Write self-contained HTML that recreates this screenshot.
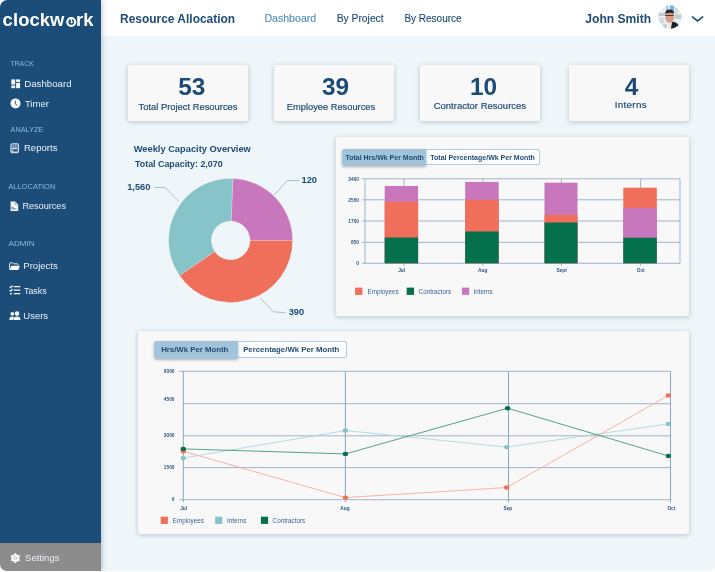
<!DOCTYPE html>
<html lang="en">
<head>
<meta charset="utf-8">
<title>Clockwork - Resource Allocation</title>
<style>
*{box-sizing:border-box;margin:0;padding:0}
html,body{width:715px;height:572px;background:#fff;overflow:hidden}
body{font-family:"Liberation Sans",sans-serif;color:#1f4b77;position:relative}
#app{position:absolute;left:0;top:0;width:715px;height:571px;border-radius:7.5px 0 5px 7px;overflow:hidden;background:#eef6f9;will-change:transform}
.abs{position:absolute;white-space:nowrap;line-height:1}
/* sidebar */
#side{position:absolute;left:0;top:0;width:101px;height:571px;background:#1c4d79;box-shadow:1px 0 5px rgba(40,70,100,.3);z-index:3}
#side .sec{position:absolute;color:#8fb9dc;line-height:1;white-space:nowrap}
#side .item{position:absolute;color:#e9eff5;line-height:1;white-space:nowrap}
#side svg{position:absolute;overflow:visible}
#logo{position:absolute;left:2.6px;top:11.4px;font-size:18.4px;font-weight:700;color:#fff;letter-spacing:.1px;line-height:1;white-space:nowrap}
#logo i{font-style:normal;color:transparent}
#settings{position:absolute;left:0;top:543.4px;width:101px;height:28px;background:#8c8c8c}
/* header */
#head{position:absolute;left:101px;top:0;width:614px;height:36px;background:#fff;z-index:2}
#head svg{position:absolute;overflow:visible}
#title{left:19.1px;top:14.4px;font-size:11.95px;font-weight:700}
.nav{top:14px;-webkit-text-stroke:.12px currentColor}
#user{left:484.3px;top:13.1px;font-size:12.1px;font-weight:700}
/* cards */
.card{position:absolute;background:#f8f8f8;border-radius:2px;box-shadow:0 1px 5px rgba(60,85,105,.32)}
.stat{width:120px;height:56px;top:64.6px}
.stat b{position:absolute;top:8.5px;font-size:24.4px;line-height:1;font-weight:700;color:#1c4a76;white-space:nowrap}
.stat span{position:absolute;line-height:1;white-space:nowrap;-webkit-text-stroke:.18px #1f4b77}
.tabs{position:absolute;display:flex;font-weight:700;line-height:1;white-space:nowrap}
.tabs div{position:relative}
.tabs .on{background:#a2c4db;border-radius:2.5px 0 0 2.5px;box-shadow:0 1.5px 3px rgba(50,80,110,.4);z-index:1}
.tabs .off{background:#fdfdfe;border:1px solid #b0cde2;border-left:0;border-radius:0 2.5px 2.5px 0}
.tabs span{position:absolute;white-space:nowrap}
#charts{position:absolute;left:0;top:0;width:715px;height:572px;z-index:1;overflow:visible}
svg text{font-family:"Liberation Sans",sans-serif}
#charts{fill:#1f4b77}
</style>
</head>
<body>
<div id="app">
  <div id="side">
    <div id="logo">clockw<i>o</i>rk</div>
    <svg width="12" height="12" viewBox="0 0 12 12" style="left:64.95px;top:15.7px" fill="none" stroke="#fff">
      <circle cx="6.25" cy="5.95" r="3.95" stroke-width="2.200"/>
      <path d="M5.100 3.050H7.600" stroke-width="1" stroke-opacity=".8"/><path d="M6.350 2.600V6.550L7.900 5.700" stroke-width="1.100"/>
    </svg>
    <div class="sec" style="left:10.4px;top:60.6px;font-size:6.9px">TRACK</div>
    <svg width="10" height="10" viewBox="0 0 10 10" style="left:11px;top:78.8px" fill="#f4f7fa">
      <rect x=".3" y=".4" width="3.9" height="5.2"/><rect x=".3" y="6.5" width="3.9" height="2.7"/><rect x="5.1" y=".4" width="4" height="2.6"/><rect x="5.1" y="3.9" width="4" height="5.3"/>
    </svg>
    <div class="item" style="left:24.2px;top:78.9px;font-size:9.7px">Dashboard</div>
    <svg width="11" height="11" viewBox="0 0 11 11" style="left:10px;top:98.2px">
      <circle cx="5.5" cy="5.4" r="5" fill="#fafbfd"/><path d="M5.3 2.9V5.9L7 7.2" stroke="#1c4d79" stroke-width=".9" fill="none" stroke-linecap="round"/>
    </svg>
    <div class="item" style="left:24.9px;top:98.8px;font-size:9.55px">Timer</div>
    <div class="sec" style="left:10.5px;top:126.3px;font-size:7.35px">ANALYZE</div>
    <svg width="10" height="11" viewBox="0 0 10 11" style="left:10px;top:143px" fill="none">
      <rect x=".9" y=".8" width="7.6" height="8.9" rx="1.4" fill="#5c7fa3" stroke="#d3deea" stroke-width="1.1"/><path d="M2.400 5.400H7M1.500 9H8" stroke="#e9eff5" stroke-width="1.1"/><path d="M2.600 6.400V8.600" stroke="#b8c9da" stroke-width=".8"/><path d="M3 2.900H3.900M5 2.900H6.300" stroke="#c3d1e0" stroke-width=".9"/><rect x="3.600" y="6.400" width="3.800" height="2" fill="#2b5a86"/>
    </svg>
    <div class="item" style="left:23.9px;top:143.3px;font-size:9.6px">Reports</div>
    <div class="sec" style="left:8.2px;top:182.8px;font-size:7.55px">ALLOCATION</div>
    <svg width="9" height="11" viewBox="0 0 9 11" style="left:9.6px;top:200.8px">
      <path d="M.6.600H5.200L8.200 3.600V10H.6Z" fill="#f9fafc"/><path d="M5 .8V3.800H8" fill="none" stroke="#7e9bb9" stroke-width=".8"/><path d="M2.100 8.400V5.200M3.500 8.400V6.200M4.900 8.400V7.100M6.200 8.400V7.800" stroke="#7391b1" stroke-width="1.200"/>
    </svg>
    <div class="item" style="left:22.4px;top:201.6px;font-size:9.15px">Resources</div>
    <div class="sec" style="left:8.5px;top:240px;font-size:8.1px">ADMIN</div>
    <svg width="12" height="9" viewBox="0 0 12 9" style="left:9.4px;top:262px">
      <path d="M.6 7.4V1.4Q.6.8 1.2.8H3.6L4.6 1.8H8.4Q9 1.800 9 2.400V3.4" fill="none" stroke="#e3eaf1" stroke-width="1"/><path d="M2.400 3.700H10.9L9.4 8.100H.6Z" fill="#fafbfd"/>
    </svg>
    <div class="item" style="left:23.3px;top:261.4px;font-size:9.55px">Projects</div>
    <svg width="12" height="11" viewBox="0 0 12 11" style="left:9.2px;top:284.6px" fill="none" stroke="#f1f5f8">
      <path d="M4.700 1.700H11.3M4.700 5.200H11.3M4.700 8.700H11.3" stroke-width="1.3"/><path d="M.6 1.600L1.700 2.600L3.600.5M.6 5.100L1.700 6.100L3.600 4" stroke-width="1.150"/><circle cx="1.900" cy="8.700" r=".95" fill="#f1f5f8" stroke="none"/>
    </svg>
    <div class="item" style="left:24px;top:286.500px;font-size:8.9px">Tasks</div>
    <svg width="12" height="10" viewBox="0 0 12 10" style="left:9px;top:311px" fill="#f4f7fa">
      <circle cx="3.300" cy="2.800" r="1.900"/><path d="M.3 8.900Q.3 5.600 3.300 5.600Q4.300 5.600 4.900 6L4.100 8.900Z"/><circle cx="8" cy="2.600" r="2.300"/><path d="M4.600 8.900Q4.600 5.500 8 5.500Q11.500 5.500 11.500 8.900Z"/>
    </svg>
    <div class="item" style="left:23.3px;top:310.700px;font-size:9.5px">Users</div>
    <div id="settings">
      <svg width="11" height="11" viewBox="0 0 11 11" style="left:10px;top:9.4px">
        <path d="M5.40 0.20L7.05 2.24L9.64 2.65L8.70 5.10L9.64 7.55L7.05 7.96L5.40 10.00L3.75 7.96L1.16 7.55L2.10 5.10L1.16 2.65L3.75 2.24Z" fill="#fbfbfb" stroke="#fbfbfb" stroke-width=".9" stroke-linejoin="round"/><circle cx="5.4" cy="5.1" r="1.5" fill="none" stroke="#bdbdbd" stroke-width=".9"/>
      </svg>
      <div class="item" style="left:25.100px;top:10.100px;font-size:9.5px">Settings</div>
    </div>
  </div>
  <div id="head">
    <div class="abs" id="title">Resource Allocation</div>
    <div class="abs nav" style="left:163.400px;color:#4f8fba;font-size:10.6px;top:12.800px">Dashboard</div>
    <div class="abs nav" style="left:235.700px;font-size:10.3px">By Project</div>
    <div class="abs nav" style="left:303.400px;font-size:10px;top:14.200px">By Resource</div>
    <div class="abs" id="user">John Smith</div>
    <svg width="24" height="24" viewBox="0 0 24 24" style="left:556.600px;top:5.300px">
      <defs><clipPath id="av"><circle cx="12" cy="12" r="11.700"/></clipPath><filter id="avb" x="-10%" y="-10%" width="120%" height="120%"><feGaussianBlur stdDeviation=".45"/></filter></defs>
      <g clip-path="url(#av)"><g filter="url(#avb)">
        <rect x="-2" y="-2" width="28" height="28" fill="#e9eff0"/>
        <rect x="-2" y="8" width="9.500" height="3" fill="#bcc8ca"/>
        <rect x="-2" y="12.500" width="8" height="6" fill="#d3dcde"/>
        <rect x="16.500" y="9.500" width="9" height="4.500" fill="#c6d0d2"/>
        <rect x="17" y="3" width="2.500" height="7" fill="#cfd9db"/>
        <rect x="8.400" y="-1" width="2" height="7.500" fill="#92c6f0"/><rect x="12.100" y="-1" width="4" height="8" fill="#73b3ea"/>
        <path d="M13 17.800L15.500 16.600L19.300 18.600Q21 19.800 21.500 26H12Z" fill="#1b202a"/><path d="M6 26Q6.500 21.500 8.500 20.500V26Z" fill="#2c3440"/>
        <path d="M5 19.800L8.500 18.800L8 22.500H4.500Z" fill="#b4cde8"/>
        <path d="M8.600 18.500L11.500 16.500L14 17.500L12.800 24H8Z" fill="#eee9ea"/>
        <ellipse cx="11.600" cy="12.400" rx="4.300" ry="5.400" fill="#d99c87"/>
        <path d="M7.300 9.600Q6.600 4.400 11.500 4.400Q16.600 4.400 15.900 9.600Q15.200 7.800 11.600 7.800Q8 7.800 7.300 9.600Z" fill="#2b282c"/>
        <path d="M7.400 10.500H15.800" stroke="#4a3533" stroke-width="1"/>
      </g></g>
    </svg>
    <svg width="14" height="8" viewBox="0 0 14 8" style="left:589.900px;top:15px" fill="none" stroke="#1f4b77" stroke-width="1.600" stroke-linecap="round" stroke-linejoin="miter">
      <path d="M1.400 1.900L6.550 5.900L11.700 1.900"/>
    </svg>
  </div>

  <div class="card stat" style="left:127.800px"><b style="left:50.500px;top:10.500px">53</b><span style="left:10.700px;top:37.300px;font-size:9.4px">Total Project Resources</span></div>
  <div class="card stat" style="left:274.100px"><b style="left:47.900px;top:10.700px">39</b><span style="left:12.700px;top:38px;font-size:9.3px">Employee Resources</span></div>
  <div class="card stat" style="left:420.100px"><b style="left:49.800px;top:10px">10</b><span style="left:13.600px;top:36.300px;font-size:9.5px">Contractor Resources</span></div>
  <div class="card stat" style="left:568.800px"><b style="left:55.900px;top:10px">4</b><span style="left:46px;top:35.100px;font-size:9.8px;letter-spacing:.3px">Interns</span></div>

  <div class="abs" style="left:133.700px;top:144.600px;font-size:9.3px;font-weight:700">Weekly Capacity Overview</div>
  <div class="abs" style="left:135px;top:160.300px;font-size:8.9px;font-weight:700">Total Capacity: 2,070</div>
  <div class="abs" style="left:127.200px;top:182.600px;font-size:9.3px;font-weight:700">1,560</div>
  <div class="abs" style="left:301.500px;top:175.700px;font-size:9.3px;font-weight:700">120</div>
  <div class="abs" style="left:288.700px;top:308.200px;font-size:9.3px;font-weight:700">390</div>

  <div class="card" style="left:336px;top:137px;width:353px;height:179px"></div>
  <div class="card" style="left:138px;top:331px;width:551px;height:203px"></div>

  <div class="tabs" style="left:342.300px;top:148.900px;height:16.400px;font-size:7px;z-index:2">
    <div class="on" style="width:84px"><span style="left:3.100px;top:5px">Total Hrs/Wk Per Month</span></div>
    <div class="off" style="width:113.300px"><span style="left:4px;top:4px">Total Percentage/Wk Per Month</span></div>
  </div>
  <div class="tabs" style="left:154.100px;top:341.100px;height:17.400px;font-size:7.8px;z-index:2">
    <div class="on" style="width:83.700px"><span style="left:7.100px;top:4.900px">Hrs/Wk Per Month</span></div>
    <div class="off" style="width:109.400px"><span style="left:5.400px;top:3.900px">Percentage/Wk Per Month</span></div>
  </div>

  <svg id="charts" viewBox="0 0 715 572">
    <path d="M232.76 178.44A62 62 0 0 1 292.60 240.40L250.00 240.40A19.4 19.4 0 0 0 231.28 221.01Z" fill="#c877bd" stroke="#f3e6ea" stroke-opacity=".55" stroke-width=".5"/>
    <path d="M292.60 240.40A62 62 0 0 1 179.50 275.52L214.61 251.39A19.4 19.4 0 0 0 250.00 240.40Z" fill="#ef6f5b" stroke="#f3e6ea" stroke-opacity=".55" stroke-width=".5"/>
    <path d="M179.50 275.52A62 62 0 0 1 232.76 178.44L231.28 221.01A19.4 19.4 0 0 0 214.61 251.39Z" fill="#86c4c9" stroke="#f3e6ea" stroke-opacity=".55" stroke-width=".5"/>
    <g fill="none" stroke="#8ea6bf" stroke-width=".7"><path d="M154.2 187.4L165 187.6L179 201.5"/><path d="M299 180.5L287.2 180.5L274.4 194.9"/><path d="M285.4 312.7L273.3 311.8L260.2 298"/></g>
    <g stroke="#a0b5ca" stroke-width="1" fill="none">
    <path d="M362.0 178.8H680.0"/>
    <path d="M362.0 199.8H680.0"/>
    <path d="M362.0 221.0H680.0"/>
    <path d="M362.0 242.3H680.0"/>
    <path d="M362.0 263.3H680.0"/>
    <path d="M404.1 178.8V265.8"/>
    <path d="M482.9 178.8V265.8"/>
    <path d="M561.4 178.8V265.8"/>
    <path d="M640.6 178.8V265.8"/>
    <path d="M365.0 178.8V263.3M680.0 178.8V263.3"/>
    </g>
    <rect x="384.7" y="186.0" width="33.4" height="77.3" fill="#c877bd"/>
    <rect x="384.7" y="201.7" width="33.4" height="61.6" fill="#ef6f5b"/>
    <rect x="384.7" y="237.5" width="33.4" height="25.8" fill="#05714c"/>
    <rect x="465.2" y="181.9" width="33.5" height="81.4" fill="#c877bd"/>
    <rect x="465.2" y="199.8" width="33.5" height="63.5" fill="#ef6f5b"/>
    <rect x="465.2" y="231.5" width="33.5" height="31.8" fill="#05714c"/>
    <rect x="544.5" y="182.7" width="33.0" height="80.6" fill="#c877bd"/>
    <rect x="544.5" y="214.8" width="33.0" height="48.5" fill="#ef6f5b"/>
    <rect x="544.5" y="222.5" width="33.0" height="40.8" fill="#05714c"/>
    <rect x="623.3" y="187.7" width="33.5" height="75.6" fill="#ef6f5b"/>
    <rect x="623.3" y="207.9" width="33.5" height="55.4" fill="#c877bd"/>
    <rect x="623.3" y="237.7" width="33.5" height="25.6" fill="#05714c"/>
    <g font-size="4.8" font-weight="700" text-anchor="end" fill="#2c5783">
    <text x="359" y="180.5">3400</text>
    <text x="359" y="201.5">2550</text>
    <text x="359" y="222.7">1700</text>
    <text x="359" y="244.0">850</text>
    <text x="359" y="265.0">0</text>
    </g><g font-size="4.8" font-weight="700" text-anchor="middle" fill="#2c5783">
    <text x="401.6" y="271.5">Jul</text>
    <text x="482.7" y="271.5">Aug</text>
    <text x="561.6" y="271.5">Sept</text>
    <text x="640.7" y="271.5">Oct</text>
    </g>
    <rect x="355.1" y="287.6" width="7.3" height="7.3" fill="#ef6f5b"/>
    <text x="367.5" y="294" font-size="6.3" fill="#3a6590">Employees</text>
    <rect x="406.7" y="287.6" width="7.3" height="7.3" fill="#05714c"/>
    <text x="418.6" y="294" font-size="6.3" fill="#3a6590">Contractors</text>
    <rect x="461.9" y="287.6" width="7.3" height="7.3" fill="#c877bd"/>
    <text x="473.5" y="294" font-size="6.3" fill="#3a6590">Interns</text>
    <g stroke="#a0b5ca" stroke-width="1" fill="none">
    <path d="M178.8 371.3H670.5"/>
    <path d="M183.3 403.7H670.5"/>
    <path d="M183.3 435.8H670.5"/>
    <path d="M183.3 467.6H670.5"/>
    <path d="M178.8 499.7H670.5"/>
    </g>
    <g stroke="#7f9ab6" stroke-width=".9" fill="none">
    <path d="M183.3 371.3V502.2"/>
    <path d="M345.4 371.3V502.2"/>
    <path d="M508.5 371.3V502.2"/>
    <path d="M670.5 371.3V502.2"/>
    </g>
    <path d="M183.3 451.3L345.4 497.6L506.7 487.5L668.4 395.4" fill="none" stroke="#f4a697" stroke-width=".85"/>
    <path d="M183.3 458.1L345.4 430.5L506.7 447.1L668.4 423.9" fill="none" stroke="#a9d6d9" stroke-width=".85"/>
    <path d="M183.3 448.9L345.4 453.9L507.6 408.2L668.4 456.0" fill="none" stroke="#3a9272" stroke-width=".85"/>
    <ellipse cx="183.3" cy="451.3" rx="2.7" ry="2.2" fill="#ef6f5b"/>
    <ellipse cx="345.4" cy="497.6" rx="2.7" ry="2.2" fill="#ef6f5b"/>
    <ellipse cx="506.7" cy="487.5" rx="2.7" ry="2.2" fill="#ef6f5b"/>
    <ellipse cx="668.4" cy="395.4" rx="2.7" ry="2.2" fill="#ef6f5b"/>
    <ellipse cx="183.3" cy="458.1" rx="2.7" ry="2.2" fill="#86c4c9"/>
    <ellipse cx="345.4" cy="430.5" rx="2.7" ry="2.2" fill="#86c4c9"/>
    <ellipse cx="506.7" cy="447.1" rx="2.7" ry="2.2" fill="#86c4c9"/>
    <ellipse cx="668.4" cy="423.9" rx="2.7" ry="2.2" fill="#86c4c9"/>
    <ellipse cx="183.3" cy="448.9" rx="2.7" ry="2.2" fill="#05714c"/>
    <ellipse cx="345.4" cy="453.9" rx="2.7" ry="2.2" fill="#05714c"/>
    <ellipse cx="507.6" cy="408.2" rx="2.7" ry="2.2" fill="#05714c"/>
    <ellipse cx="668.4" cy="456.0" rx="2.7" ry="2.2" fill="#05714c"/>
    <g font-size="4.8" font-weight="700" text-anchor="end" fill="#2c5783">
    <text x="174.5" y="373.0">6000</text>
    <text x="174.5" y="401.3">4500</text>
    <text x="174.5" y="437.2">3000</text>
    <text x="174.5" y="469.3">1500</text>
    <text x="174.5" y="501.1">0</text>
    </g><g font-size="4.8" font-weight="700" text-anchor="middle" fill="#2c5783">
    <text x="183.6" y="509.5">Jul</text>
    <text x="345" y="509.5">Aug</text>
    <text x="507.9" y="509.5">Sep</text>
    <text x="671.4" y="509.5">Oct</text>
    </g>
    <rect x="160.7" y="516.7" width="7.2" height="7.2" fill="#ef6f5b"/>
    <text x="172.7" y="523" font-size="6.3" fill="#3a6590">Employees</text>
    <rect x="215.1" y="516.7" width="7.2" height="7.2" fill="#86c4c9"/>
    <text x="227.1" y="523" font-size="6.3" fill="#3a6590">Interns</text>
    <rect x="260.9" y="516.7" width="7.2" height="7.2" fill="#05714c"/>
    <text x="272.6" y="523" font-size="6.3" fill="#3a6590">Contractors</text>
  </svg>
</div>
</body>
</html>
